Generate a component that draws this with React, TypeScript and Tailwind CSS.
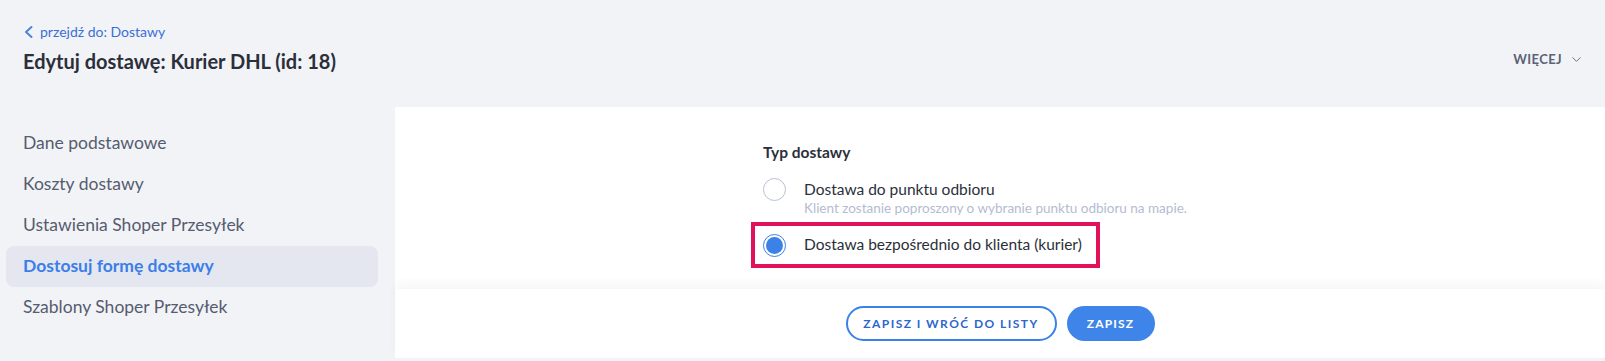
import { ChevronDown } from "lucide-react";

const menu = [
  "Dane podstawowe",
  "Koszty dostawy",
  "Ustawienia Shoper Przesyłek",
  "Dostosuj formę dostawy",
  "Szablony Shoper Przesyłek",
];

export default function App() {
  return (
    <div
      className="w-[1605px] h-[361px] bg-[#f2f3f7] text-[#2f3442] overflow-hidden"
      style={{ fontFamily: "Lato, 'Noto Sans', sans-serif" }}
    >
      {/* header */}
      <div className="flex items-start justify-between h-[107px] pl-[23px] pr-[21px]">
        <div className="pt-[23px]">
          <a className="flex items-center gap-[7px] text-[14px] text-[#3a6fd8] leading-[18px]">
            <svg width="9" height="12" viewBox="0 0 9 12" className="ml-[1px]">
              <polyline points="7.5,1 2,6 7.5,11" fill="none" stroke="#4a80e0" strokeWidth="1.9" strokeLinecap="round" strokeLinejoin="round" />
            </svg>
            przejdź do: Dostawy
          </a>
          <h1 className="mt-[8px] text-[20px] font-bold leading-[24px] text-[#2b2f3a]">
            Edytuj dostawę: Kurier DHL (id: 18)
          </h1>
        </div>
        <div className="flex items-center gap-[7px] pt-[50px] text-[13px] font-bold tracking-[0.03em] text-[#5a6275]">
          WIĘCEJ
          <ChevronDown className="w-[15px] h-[15px] text-[#6b7386]" strokeWidth={1.6} />
        </div>
      </div>

      <div className="flex">
        {/* sidebar */}
        <nav className="w-[395px] shrink-0 pl-[6px] pr-[17px] pt-[16px] flex flex-col">
          {menu.map((item, i) => {
            const active = i === 3;
            return (
              <div
                key={item}
                className={
                  active
                    ? "h-[41px] flex items-center pl-[17px] rounded-[8px] bg-[#e4e7f0] text-[#3b7ee8] font-bold text-[17.5px]"
                    : "h-[41px] flex items-center pl-[17px] text-[#555c6e] text-[17.5px]"
                }
              >
                {item}
              </div>
            );
          })}
        </nav>

        {/* main panel */}
        <div className="flex-1 flex flex-col">
          <div className="bg-white h-[182px] pt-[35px]">
            <div className="w-[474px] mx-auto">
              <div className="text-[15.5px] font-bold text-[#2b2f3a] leading-[20px]">Typ dostawy</div>
              <div className="mt-[17px] flex items-start gap-[18px]">
                <span className="w-[23px] h-[23px] rounded-full border border-[#b7c0d6] bg-white shrink-0 -mt-[1px]" />
                <div>
                  <div className="text-[15.5px] leading-[20px] text-[#2b2f3a]">Dostawa do punktu odbioru</div>
                  <div className="text-[13.5px] leading-[18px] text-[#b4bcd2]">
                    Klient zostanie poproszony o wybranie punktu odbioru na mapie.
                  </div>
                </div>
              </div>
              <div className="mt-[5px] -ml-[12px] w-[349px] h-[46px] border-[4px] border-[#e2125a] flex items-center gap-[18px] pl-[8px]">
                <span className="w-[23px] h-[23px] rounded-full border border-[#3b82e8] bg-white shrink-0 flex items-center justify-center">
                  <span className="w-[17px] h-[17px] rounded-full bg-[#3b82e8]" />
                </span>
                <span className="text-[15.5px] text-[#2b2f3a]">Dostawa bezpośrednio do klienta (kurier)</span>
              </div>
            </div>
          </div>
          <div className="h-[69px] bg-white shadow-[0_-6px_10px_rgba(0,0,0,0.035)] flex items-center justify-center gap-[10px] relative">
            <button className="h-[35px] w-[211px] rounded-full border-2 border-[#3b82e8] bg-white text-[12px] font-bold tracking-[0.12em] text-[#2e66cc]">
              ZAPISZ I WRÓĆ DO LISTY
            </button>
            <button className="h-[35px] w-[88px] rounded-full bg-[#3f84e8] text-[12px] font-bold tracking-[0.1em] text-white">
              ZAPISZ
            </button>
          </div>
        </div>
      </div>
    </div>
  );
}
